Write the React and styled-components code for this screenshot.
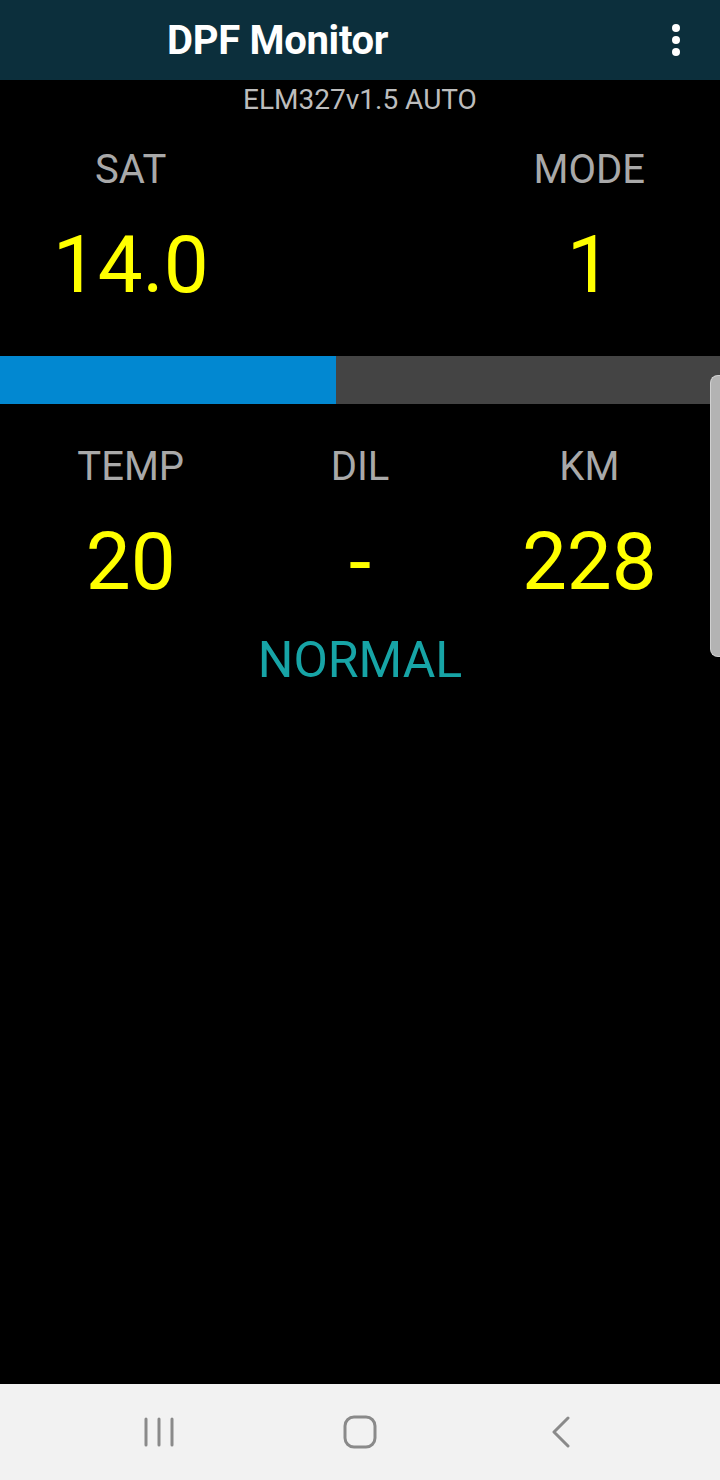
import React from "react";
import styled, { createGlobalStyle } from "styled-components";

const Global = createGlobalStyle`
  html, body { margin: 0; padding: 0; background: #000; }
  body { font-family: Roboto, "Noto Sans", "Liberation Sans", sans-serif; }
  * { box-sizing: border-box; }
`;

const Screen = styled.div`
  position: relative;
  width: 720px;
  height: 1480px;
  background: #000;
  display: flex;
  flex-direction: column;
  overflow: hidden;
`;

const AppBar = styled.header`
  height: 80px;
  flex: none;
  background: #0c2f3c;
  display: flex;
  align-items: center;
  padding: 2px 40px 0 167px;
`;

const Title = styled.h1`
  margin: 0;
  flex: 1;
  font-size: 40px;
  font-weight: 700;
  color: #fff;
  line-height: 1;
  letter-spacing: -0.3px;
`;

const Kebab = styled.div`
  display: flex;
  flex-direction: column;
  gap: 4px;
  margin-top: -2px;
  span {
    width: 8px;
    height: 8px;
    border-radius: 50%;
    background: #fff;
  }
`;

const Adapter = styled.div`
  margin-top: 6px;
  text-align: center;
  font-size: 28px;
  line-height: 1;
  color: #bdbdbd;
`;

const StatGrid = styled.div`
  display: grid;
  grid-template-columns: repeat(3, 1fr);
  padding: 0 16px;
  margin-top: ${(p) => p.$top}px;
`;

const Stat = styled.div`
  display: flex;
  flex-direction: column;
  align-items: center;
`;

const Label = styled.div`
  font-size: 40px;
  line-height: 1;
  color: #a9a9a9;
`;

const Value = styled.div`
  margin-top: 35px;
  font-size: 80px;
  line-height: 1;
  color: #ffff00;
`;

const Track = styled.div`
  margin-top: 51px;
  height: 48px;
  background: #444444;
  display: flex;
`;

const Fill = styled.div`
  height: 100%;
  background: #0288d1;
`;

const Status = styled.div`
  margin-top: 33px;
  text-align: center;
  font-size: 50px;
  line-height: 1;
  color: #17a4a6;
`;

const Spacer = styled.div`
  flex: 1;
`;

const NavBar = styled.nav`
  height: 96px;
  flex: none;
  background: #f2f2f2;
  display: grid;
  grid-template-columns: repeat(3, 201px);
  justify-content: center;
  align-items: center;
  justify-items: center;
`;

const ScrollThumb = styled.div`
  position: absolute;
  right: 0;
  top: 375px;
  width: 10px;
  height: 282px;
  background: #b3b3b3;
  border: 1px solid #d0d0d0;
  border-right: none;
  border-radius: 8px 0 0 8px;
`;

const stroke = "#8a8a8a";

export default function App() {
  const top = [
    { label: "SAT", value: "14.0" },
    null,
    { label: "MODE", value: "1" },
  ];
  const bottom = [
    { label: "TEMP", value: "20" },
    { label: "DIL", value: "-" },
    { label: "KM", value: "228" },
  ];
  const progress = 336;
  return (
    <Screen>
      <Global />
      <AppBar>
        <Title>DPF Monitor</Title>
        <Kebab>
          <span />
          <span />
          <span />
        </Kebab>
      </AppBar>
      <Adapter>ELM327v1.5 AUTO</Adapter>
      <StatGrid $top={36}>
        {top.map((s, i) =>
          s ? (
            <Stat key={i}>
              <Label>{s.label}</Label>
              <Value>{s.value}</Value>
            </Stat>
          ) : (
            <Stat key={i} />
          )
        )}
      </StatGrid>
      <Track>
        <Fill style={{ width: progress }} />
      </Track>
      <StatGrid $top={43}>
        {bottom.map((s, i) => (
          <Stat key={i}>
            <Label>{s.label}</Label>
            <Value>{s.value}</Value>
          </Stat>
        ))}
      </StatGrid>
      <Status>NORMAL</Status>
      <Spacer />
      <NavBar>
        <svg width="32" height="32" viewBox="0 0 32 32">
          <g stroke={stroke} strokeWidth="3" strokeLinecap="round">
            <line x1="3" y1="3" x2="3" y2="29" />
            <line x1="16" y1="3" x2="16" y2="29" />
            <line x1="29" y1="3" x2="29" y2="29" />
          </g>
        </svg>
        <svg width="34" height="34" viewBox="0 0 34 34">
          <rect x="2" y="2" width="30" height="30" rx="9" fill="none" stroke={stroke} strokeWidth="3" />
        </svg>
        <svg width="20" height="32" viewBox="0 0 20 32">
          <polyline points="17,2 3,16 17,30" fill="none" stroke={stroke} strokeWidth="3" strokeLinecap="round" strokeLinejoin="round" />
        </svg>
      </NavBar>
      <ScrollThumb />
    </Screen>
  );
}
